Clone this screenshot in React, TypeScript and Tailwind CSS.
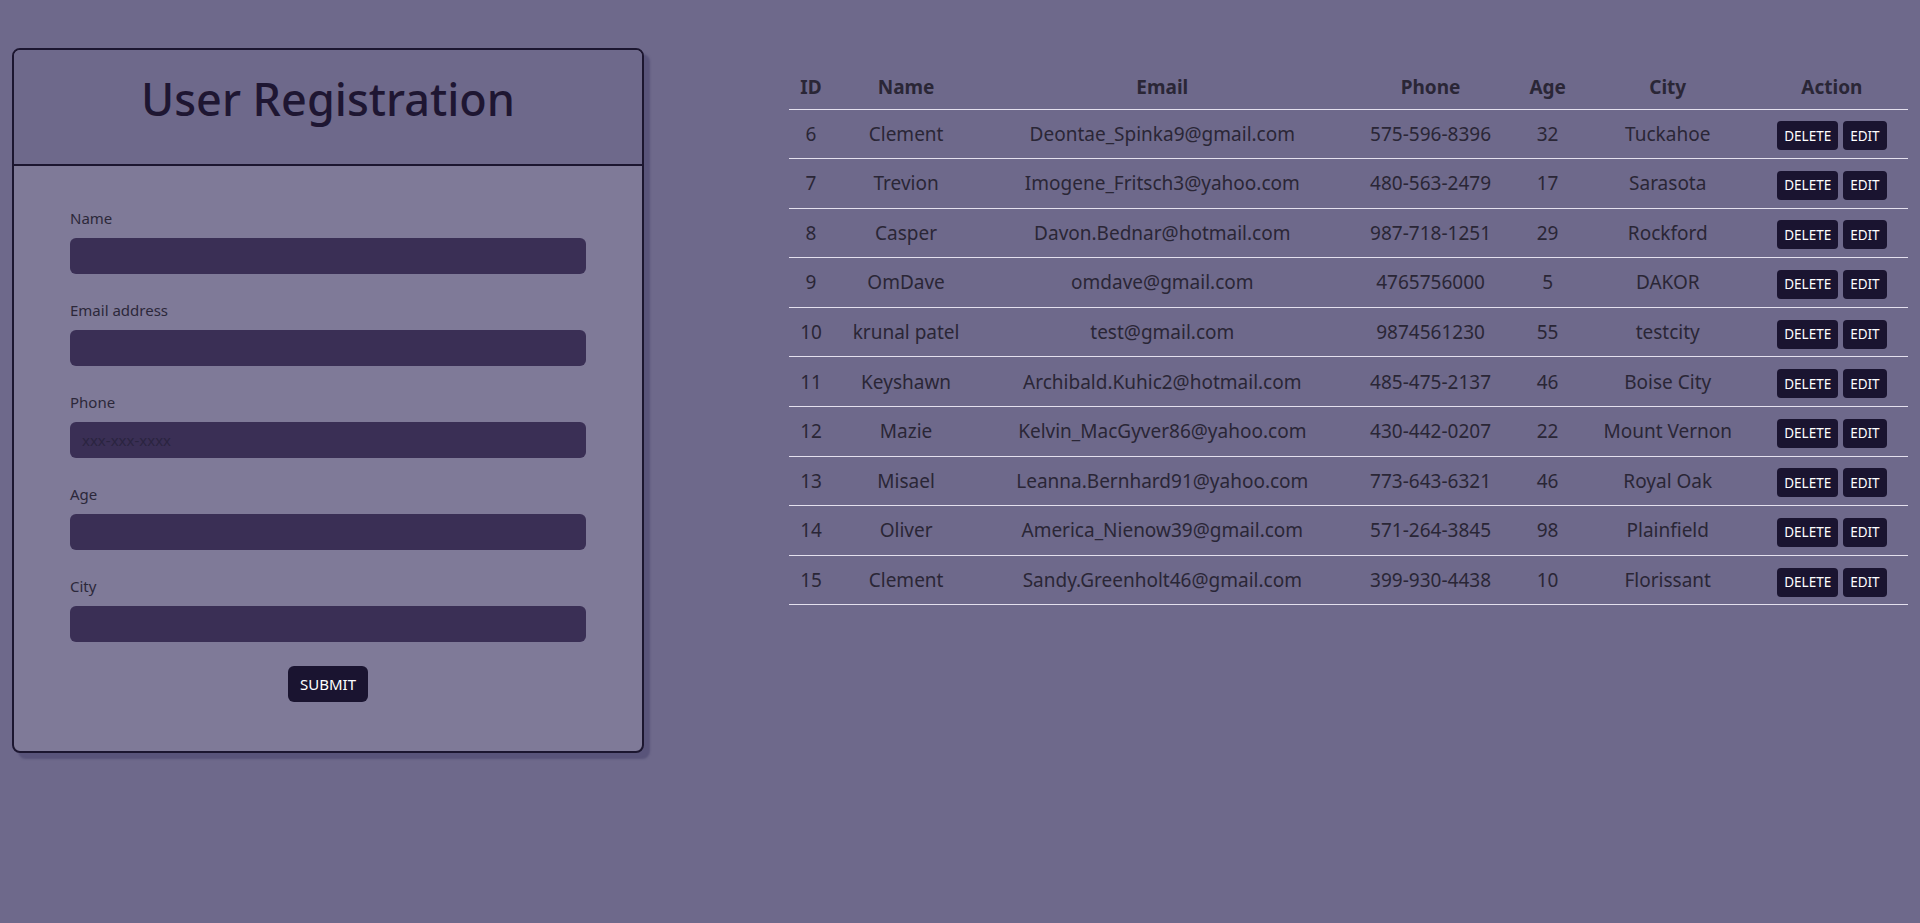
import { useState } from "react";

type User = {
  id: number;
  name: string;
  email: string;
  phone: string;
  age: number;
  city: string;
};

const users: User[] = [
  { id: 6, name: "Clement", email: "Deontae_Spinka9@gmail.com", phone: "575-596-8396", age: 32, city: "Tuckahoe" },
  { id: 7, name: "Trevion", email: "Imogene_Fritsch3@yahoo.com", phone: "480-563-2479", age: 17, city: "Sarasota" },
  { id: 8, name: "Casper", email: "Davon.Bednar@hotmail.com", phone: "987-718-1251", age: 29, city: "Rockford" },
  { id: 9, name: "OmDave", email: "omdave@gmail.com", phone: "4765756000", age: 5, city: "DAKOR" },
  { id: 10, name: "krunal patel", email: "test@gmail.com", phone: "9874561230", age: 55, city: "testcity" },
  { id: 11, name: "Keyshawn", email: "Archibald.Kuhic2@hotmail.com", phone: "485-475-2137", age: 46, city: "Boise City" },
  { id: 12, name: "Mazie", email: "Kelvin_MacGyver86@yahoo.com", phone: "430-442-0207", age: 22, city: "Mount Vernon" },
  { id: 13, name: "Misael", email: "Leanna.Bernhard91@yahoo.com", phone: "773-643-6321", age: 46, city: "Royal Oak" },
  { id: 14, name: "Oliver", email: "America_Nienow39@gmail.com", phone: "571-264-3845", age: 98, city: "Plainfield" },
  { id: 15, name: "Clement", email: "Sandy.Greenholt46@gmail.com", phone: "399-930-4438", age: 10, city: "Florissant" },
];

const fields = [
  { key: "name", label: "Name", type: "text", placeholder: "" },
  { key: "email", label: "Email address", type: "email", placeholder: "" },
  { key: "phone", label: "Phone", type: "tel", placeholder: "xxx-xxx-xxxx" },
  { key: "age", label: "Age", type: "number", placeholder: "" },
  { key: "city", label: "City", type: "text", placeholder: "" },
];

const RegistrationForm = () => {
  const [form, setForm] = useState<Record<string, string>>({});

  return (
    <div className="w-[632px] mt-12 rounded-lg border-2 border-[#1c1630] bg-[#7f7a98] shadow-[6px_6px_2px_#59547a] overflow-hidden">
      <div className="h-[116px] flex items-center justify-center bg-[#6e698b] border-b-2 border-[#1c1630]">
        <h1 className="text-[45px] font-medium text-[#1e1632] leading-none pb-[18px]">
          User Registration
        </h1>
      </div>
      <form
        className="px-[56px] pt-[40px] pb-[49px] flex flex-col"
        onSubmit={(e) => e.preventDefault()}
      >
        {fields.map((f) => (
          <div key={f.key} className="mb-6">
            <label className="block text-[15px] leading-6 mb-2 text-[#2c283a]">
              {f.label}
            </label>
            <input
              type={f.type}
              placeholder={f.placeholder}
              value={form[f.key] || ""}
              onChange={(e) => setForm((prev) => ({ ...prev, [f.key]: e.target.value }))}
              className="w-full h-9 rounded-md bg-[#3a2f55] px-3 text-[15px] text-white placeholder:text-[#2a2440] outline-none"
            />
          </div>
        ))}
        <div className="flex justify-center">
          <button
            type="submit"
            className="h-9 px-3 rounded-md bg-[#1a1430] text-white text-[15px]"
          >
            SUBMIT
          </button>
        </div>
      </form>
    </div>
  );
};

const UserTable = () => {
  return (
    <table className="w-[1119px] mt-[60px] table-fixed border-collapse text-center text-[#2a2636]">
      <colgroup>
        <col className="w-[44px]" />
        <col className="w-[146px]" />
        <col className="w-[366px]" />
        <col className="w-[170px]" />
        <col className="w-[64px]" />
        <col className="w-[176px]" />
        <col className="w-[152px]" />
      </colgroup>
      <thead>
        <tr className="h-[49px] border-b border-[#e4e0ee]">
          {["ID", "Name", "Email", "Phone", "Age", "City", "Action"].map((h) => (
            <th key={h} className="text-[19px] font-bold align-bottom pb-[7px]">
              {h}
            </th>
          ))}
        </tr>
      </thead>
      <tbody>
        {users.map((u) => (
          <tr key={u.id} className="h-[49.6px] border-b border-[#e4e0ee] text-[19px]">
            <td>{u.id}</td>
            <td>{u.name}</td>
            <td>{u.email}</td>
            <td>{u.phone}</td>
            <td>{u.age}</td>
            <td>{u.city}</td>
            <td>
              <div className="flex justify-center gap-[5px] pt-[4px]">
                <button className="h-[29px] px-[7px] rounded bg-[#1a1430] text-white text-[13.5px]">
                  DELETE
                </button>
                <button className="h-[29px] px-[7px] rounded bg-[#1a1430] text-white text-[13.5px]">
                  EDIT
                </button>
              </div>
            </td>
          </tr>
        ))}
      </tbody>
    </table>
  );
};

export default function App() {
  return (
    <div className="min-h-screen bg-[#6e698b] font-['Noto_Sans',sans-serif] flex items-start px-3">
      <RegistrationForm />
      <div className="ml-auto">
        <UserTable />
      </div>
    </div>
  );
}
